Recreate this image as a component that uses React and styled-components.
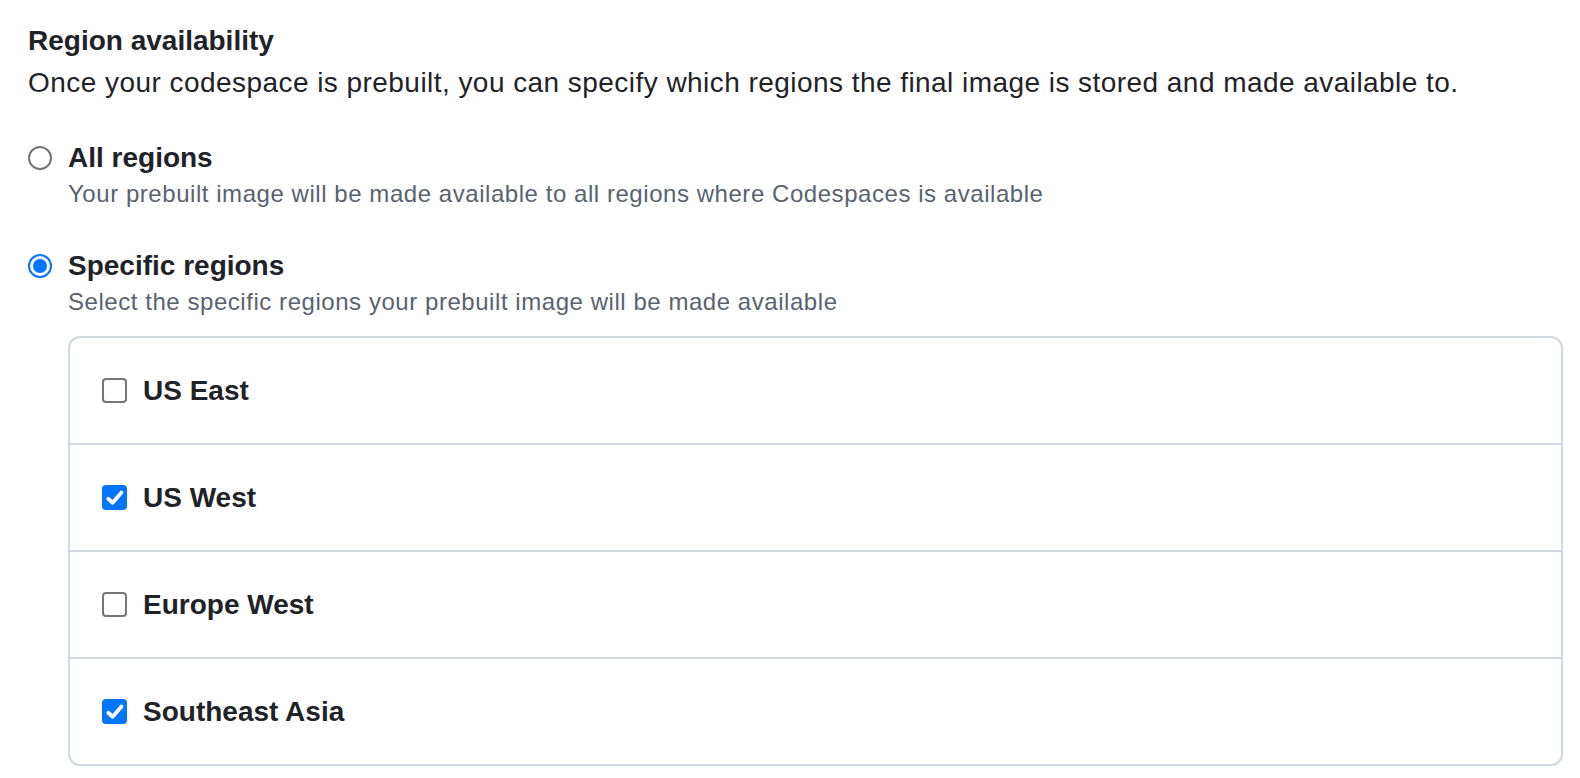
import React, { useState } from "react";
import styled, { createGlobalStyle } from "styled-components";

const GlobalStyle = createGlobalStyle`
  body {
    margin: 0;
    background: #ffffff;
    font-family: "Liberation Sans", Arial, sans-serif;
    color: #1f2328;
  }
`;

const Page = styled.div`
  padding: 24px 28px 0 28px;
  width: 1535px;
`;

const Title = styled.h2`
  margin: 0;
  font-size: 28px;
  font-weight: 700;
  line-height: 34px;
`;

const Lead = styled.p`
  margin: 4px 0 0 0;
  font-size: 28px;
  line-height: 42px;
  letter-spacing: 0.45px;
`;

const Options = styled.div`
  display: flex;
  flex-direction: column;
  gap: 37px;
  margin-top: 37px;
`;

const Option = styled.label`
  display: grid;
  grid-template-columns: 24px 1fr;
  column-gap: 16px;
  align-items: center;
  cursor: pointer;
`;

const Radio = styled.span`
  width: 24px;
  height: 24px;
  box-sizing: border-box;
  border-radius: 50%;
  border: 2px solid ${(p) => (p.$checked ? "#0075ff" : "#767676")};
  display: flex;
  align-items: center;
  justify-content: center;
  &::after {
    content: "";
    display: ${(p) => (p.$checked ? "block" : "none")};
    width: 14px;
    height: 14px;
    border-radius: 50%;
    background: #0075ff;
  }
`;

const OptionLabel = styled.span`
  font-size: 28px;
  font-weight: 700;
  line-height: 34px;
`;

const Note = styled.span`
  grid-column: 2;
  margin-top: 1px;
  font-size: 24px;
  line-height: 36px;
  letter-spacing: 0.55px;
  color: #59636e;
`;

const RegionBox = styled.div`
  grid-column: 2;
  margin-top: 16px;
  border: 2px solid #d1d9e0;
  border-radius: 12px;
  display: flex;
  flex-direction: column;
`;

const Row = styled.label`
  display: flex;
  align-items: center;
  gap: 16px;
  height: 105px;
  padding: 0 32px;
  cursor: pointer;
  & + & {
    border-top: 2px solid #d1d9e0;
  }
`;

const Box = styled.span`
  width: 25px;
  height: 25px;
  box-sizing: border-box;
  border-radius: 4px;
  border: ${(p) => (p.$checked ? "none" : "2px solid #767676")};
  background: ${(p) => (p.$checked ? "#0075ff" : "#fff")};
  display: flex;
  align-items: center;
  justify-content: center;
`;

const RowLabel = styled.span`
  font-size: 28px;
  font-weight: 700;
`;

const regions = [
  { name: "US East", on: false },
  { name: "US West", on: true },
  { name: "Europe West", on: false },
  { name: "Southeast Asia", on: true },
];

function Check() {
  return (
    <svg width="20" height="20" viewBox="0 0 16 16">
      <path
        d="M2.6 8.6 L6.1 11.8 L13.2 3.6"
        fill="none"
        stroke="#fff"
        strokeWidth="3"
        strokeLinecap="round"
        strokeLinejoin="round"
      />
    </svg>
  );
}

export default function App() {
  const [mode, setMode] = useState("specific");
  const [picked, setPicked] = useState(regions.map((r) => r.on));

  const toggle = (i) =>
    setPicked((prev) => prev.map((v, j) => (j === i ? !v : v)));

  return (
    <Page>
      <GlobalStyle />
      <Title>Region availability</Title>
      <Lead>
        Once your codespace is prebuilt, you can specify which regions the final
        image is stored and made available to.
      </Lead>
      <Options>
        <Option onClick={() => setMode("all")}>
          <Radio $checked={mode === "all"} />
          <OptionLabel>All regions</OptionLabel>
          <Note>
            Your prebuilt image will be made available to all regions where
            Codespaces is available
          </Note>
        </Option>
        <Option as="div">
          <Radio $checked={mode === "specific"} onClick={() => setMode("specific")} />
          <OptionLabel onClick={() => setMode("specific")}>Specific regions</OptionLabel>
          <Note>Select the specific regions your prebuilt image will be made available</Note>
          <RegionBox>
            {regions.map((r, i) => (
              <Row key={r.name} onClick={() => toggle(i)}>
                <Box $checked={picked[i]}>{picked[i] && <Check />}</Box>
                <RowLabel>{r.name}</RowLabel>
              </Row>
            ))}
          </RegionBox>
        </Option>
      </Options>
    </Page>
  );
}
